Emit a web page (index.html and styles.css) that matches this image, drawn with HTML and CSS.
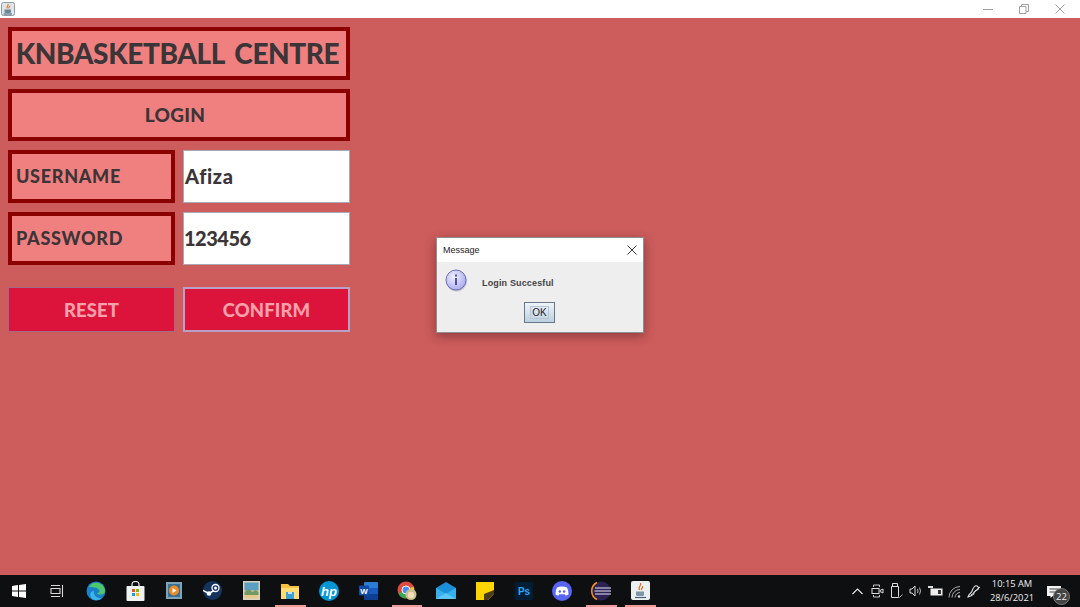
FILE: index.html
```html
<!DOCTYPE html>
<html lang="en">
<head>
  <meta charset="UTF-8">
  <title>KNBasketball Centre</title>
  <link rel="stylesheet" href="styles.css">
</head>
<body>
<div class="app">
  <div class="title-bar">
    <svg class="java-icon" width="14" height="14" viewBox="0 0 14 14">
      <rect x="0.5" y="0.5" width="13" height="13" rx="2" fill="#dfe6ea" stroke="#8d9aa3"/>
      <path d="M7 2c1 2-2 2-.6 4.4M8.6 3.6c.6 1.4-1.4 1.6-.6 2.8" fill="none" stroke="#e2702a" stroke-width="1.1"/>
      <path d="M3.5 7.5h6.500v2.500q0 1-1 1h-4.500q-1 0-1-1z" fill="#6f8595"/>
      <path d="M2.500 12h8.500" stroke="#3f5e78"/>
    </svg>
    <div class="window-controls">
      <svg width="10" height="10" viewBox="0 0 10 10"><path d="M0 5.500h10" stroke="#a0a0a0"/></svg>
      <svg width="10" height="10" viewBox="0 0 10 10"><path d="M.5 2.500h6.500v7h-6.500zM2.500 2.500v-2h7v7h-2.500" fill="none" stroke="#a0a0a0"/></svg>
      <svg width="10" height="10" viewBox="0 0 10 10"><path d="M.5.500l9 9M9.500.500l-9 9" stroke="#a0a0a0"/></svg>
    </div>
  </div>

  <main class="content">
    <div class="form">
      <div class="box box-wide heading">KNBASKETBALL CENTRE</div>
      <div class="box box-wide login">LOGIN</div>
      <div class="box field-label">USERNAME</div>
      <div class="field-value">Afiza</div>
      <div class="box field-label">PASSWORD</div>
      <div class="field-value field-digits">123456</div>
      <button class="action action-reset">RESET</button>
      <button class="action action-confirm">CONFIRM</button>
    </div>

    <div class="dialog">
      <div class="dialog-title">
        <span>Message</span>
        <svg width="10" height="10" viewBox="0 0 10 10"><path d="M.5.500l9 9M9.500.500l-9 9" stroke="#222" stroke-width=".9"/></svg>
      </div>
      <div class="dialog-body">
        <div class="dialog-message">
          <svg width="24" height="24" viewBox="0 0 24 24" class="info-icon">
            <defs>
              <radialGradient id="info-fill" cx="40%" cy="35%" r="70%">
                <stop offset="0" stop-color="#eeeeff"/>
                <stop offset="1" stop-color="#a9a9ee"/>
              </radialGradient>
            </defs>
            <circle cx="11.500" cy="12" r="10.500" fill="#9a9aa8" opacity=".5"/>
            <circle cx="11" cy="11" r="10" fill="url(#info-fill)" stroke="#6f6fb5"/>
            <rect x="10" y="9" width="2" height="7" fill="#5050a0"/>
            <rect x="10" y="5.500" width="2" height="2" fill="#5050a0"/>
          </svg>
          <span class="dialog-text">Login Succesful</span>
        </div>
        <button class="ok-button"><span>OK</span></button>
      </div>
    </div>
  </main>

  <footer class="taskbar">
    <div class="task-icons">
      <div class="task"><svg width="14" height="14" viewBox="0 0 14 14"><path d="M0 2l6-.9v5.400h-6zM7 1l7-1v6.500h-7zM0 7.500h6v5.400l-6-.9zM7 7.500h7v6.500l-7-1z" fill="#fff"/></svg></div>
      <div class="task"><svg width="14" height="14" viewBox="0 0 14 14"><path d="M1 1.500h9M1 12.500h9M1 4.500h9v5h-9zM12.500 1v12" fill="none" stroke="#d8d8d8" stroke-width="1.100"/></svg></div>
      <div class="task"><svg width="20" height="20" viewBox="0 0 20 20"><circle cx="10" cy="10" r="9.500" fill="#1a7fc8"/><path d="M3 6c3-6 14-6 16 3 .5 3-2 4.500-4.500 4.500-2 0-3.500-.6-3.500-1.500 2 0 3-1 2.500-2.500C12.500 6.500 6 5.500 3 6z" fill="#4ec96a"/><path d="M8 10c-1 4 3 8 8 7-4 3.500-9 2.500-11-.5C3 13 5 10 8 10z" fill="#39b6e8"/></svg></div>
      <div class="task"><svg width="19" height="20" viewBox="0 0 19 20"><path d="M6 6V3.500a3.500 3 0 0 1 7 0V6" fill="none" stroke="#eee" stroke-width="1.200"/><rect x="0.500" y="5" width="18" height="15" rx="1" fill="#f2f2f2"/><rect x="6" y="8" width="3" height="3" fill="#f25022"/><rect x="10" y="8" width="3" height="3" fill="#7fba00"/><rect x="6" y="12" width="3" height="3" fill="#00a4ef"/><rect x="10" y="12" width="3" height="3" fill="#ffb900"/></svg></div>
      <div class="task"><svg width="16" height="17" viewBox="0 0 16 17"><rect width="16" height="17" fill="#7ea3bd"/><rect x="2" y="2" width="12" height="13" fill="#3b6f93"/><circle cx="8" cy="8.500" r="5" fill="#f08a24"/><path d="M6.500 6l4 2.500-4 2.500z" fill="#fff"/></svg></div>
      <div class="task"><svg width="19" height="19" viewBox="0 0 19 19"><circle cx="9.500" cy="9.500" r="9.500" fill="#14345c"/><circle cx="12.500" cy="7" r="3.500" fill="none" stroke="#fff" stroke-width="1.300"/><circle cx="12.500" cy="7" r="1.500" fill="#fff"/><circle cx="6" cy="12.500" r="2.300" fill="#fff"/><path d="M0 9.500l6 3 5-3" fill="none" stroke="#fff" stroke-width="1.500"/></svg></div>
      <div class="task"><svg width="17" height="19" viewBox="0 0 17 19"><rect width="17" height="19" fill="#d8d4c4"/><rect x="1.500" y="1.500" width="14" height="16" fill="#e5c88a"/><rect x="1.500" y="1.500" width="14" height="8" fill="#5c9fc4"/><path d="M1.500 11l4-3 4 3 3-2 3 2v3h-14z" fill="#6f9a64"/></svg></div>
      <div class="task task-open"><svg width="18" height="16" viewBox="0 0 18 16"><path d="M0 1h7l2 2h9v13h-18z" fill="#f5c242"/><path d="M0 5h18v11h-18z" fill="#ffdd76"/><rect x="5" y="9" width="8" height="7" fill="#3aa0d8"/><rect x="7" y="9" width="4" height="2" fill="#bfe3f4"/></svg></div>
      <div class="task"><svg width="20" height="20" viewBox="0 0 20 20"><circle cx="10" cy="10" r="10" fill="#0096d6"/><text x="10" y="14.500" class="hp-text">hp</text></svg></div>
      <div class="task"><svg width="19" height="18" viewBox="0 0 19 18"><rect x="5" width="14" height="18" rx="1" fill="#2b7cd3"/><rect x="5" y="6" width="14" height="6" fill="#185abd"/><rect x="5" y="12" width="14" height="6" fill="#103f91"/><rect y="3.500" width="10" height="10" rx="1" fill="#124aa8"/><text x="5" y="11.500" class="word-text">W</text></svg></div>
      <div class="task task-open"><svg width="20" height="20" viewBox="0 0 20 20"><circle cx="9" cy="9" r="8.500" fill="#dd4b3e"/><path d="M9 9l-7.500 3.500A8.500 8.500 0 0 0 9 17.500z" fill="#3aa757"/><path d="M9 9l7.500-3.500a8.500 8.500 0 0 1-3 11z" fill="#fbc02d"/><circle cx="9" cy="9" r="4" fill="#4a8bf5" stroke="#fff"/><circle cx="14" cy="13.500" r="5.500" fill="#c9c08a"/><circle cx="14" cy="14" r="3.200" fill="#f3ddb9"/></svg></div>
      <div class="task"><svg width="20" height="17" viewBox="0 0 20 17"><path d="M0 6L10 0l10 6v11h-20z" fill="#1b8fd8"/><path d="M0 6l10 6 10-6v11h-20z" fill="#35b2ee"/><path d="M0 17l10-6 10 6z" fill="#5cc6f5"/></svg></div>
      <div class="task"><svg width="18" height="18" viewBox="0 0 18 18"><path d="M0 0h18v12l-6 6h-12z" fill="#ffd500"/><path d="M18 8v4l-6 6h-4v-6z" fill="#4a3f1a"/></svg></div>
      <div class="task"><svg width="18" height="18" viewBox="0 0 18 18"><rect width="18" height="18" rx="2" fill="#001e36"/><text x="9" y="12.500" class="ps-text">Ps</text></svg></div>
      <div class="task"><svg width="20" height="20" viewBox="0 0 20 20"><circle cx="10" cy="10" r="10" fill="#5865f2"/><path d="M5 6.500q5-2 10 0 1.500 3 1.500 7-1.500 1-3 1l-.8-1.200h-5.400l-.8 1.200q-1.500 0-3-1 0-4 1.500-7z" fill="#fff"/><circle cx="7.800" cy="10.500" r="1.300" fill="#5865f2"/><circle cx="12.200" cy="10.500" r="1.300" fill="#5865f2"/></svg></div>
      <div class="task task-open"><svg width="20" height="20" viewBox="0 0 20 20"><circle cx="10" cy="10" r="9.500" fill="#2c2255"/><path d="M6 1.500a9.500 9.500 0 0 0 0 17" fill="none" stroke="#f7941e" stroke-width="1.500"/><path d="M4 7h16M3.500 10h16.500M4 13h16" stroke="#e8e4f4" stroke-width="1.200"/></svg></div>
      <div class="task task-open"><svg width="19" height="19" viewBox="0 0 19 19"><rect width="19" height="19" rx="2" fill="#eceff0"/><path d="M9.500 2c1.500 3-3 3-1 7M11.500 5c1 2-2 2.500-.8 4" fill="none" stroke="#e2702a" stroke-width="1.300"/><path d="M5 10.500h8v3q0 1.500-1.500 1.500h-5q-1.500 0-1.500-1.500z" fill="#7c96a8"/><path d="M4 16.500h11" stroke="#3f5e78" stroke-width="1.200"/></svg></div>
    </div>

    <div class="tray">
      <span class="tray-slot"><svg width="11" height="7" viewBox="0 0 11 7"><path d="M.5 6l5-5 5 5" fill="none" stroke="#e8e8e8" stroke-width="1.100"/></svg></span>
      <span class="tray-slot"><svg width="13" height="14" viewBox="0 0 13 14"><path d="M2.500 3V1h6v2M2.500 11v2h6v-2" fill="none" stroke="#ccc"/><rect x="1" y="4.500" width="7" height="5" fill="none" stroke="#ddd"/><path d="M9 6.500l3-1.500v4l-3-1.500z" fill="none" stroke="#ddd"/></svg></span>
      <span class="tray-slot"><svg width="13" height="16" viewBox="0 0 13 16"><path d="M2.500 3.500v-3h5v3M1.500 3.500h7v11h-7z" fill="none" stroke="#ddd"/><path d="M8 13l1.500 1.500 3-3" fill="none" stroke="#aaa"/></svg></span>
      <span class="tray-slot"><svg width="14" height="14" viewBox="0 0 14 14"><path d="M1 5h2l3-3v10l-3-3h-2z" fill="none" stroke="#ddd"/><path d="M8.500 5q1 2 0 4M10.500 3.500q2 3.500 0 7" fill="none" stroke="#bbb"/></svg></span>
      <span class="tray-slot"><svg width="15" height="10" viewBox="0 0 15 10"><rect x="2.500" y="2.500" width="12" height="7" fill="#eee"/><path d="M0 0h5v2h-5z" fill="#ddd"/><rect x="10" y="4" width="3" height="4" fill="#333"/></svg></span>
      <span class="tray-slot"><svg width="13" height="13" viewBox="0 0 13 13"><path d="M1 12.500a11 11 0 0 1 11-11M4 12.500a8 8 0 0 1 8-8M7 12.500a5 5 0 0 1 5-5" fill="none" stroke="#aaa"/><circle cx="11" cy="11.500" r="1.200" fill="#ddd"/></svg></span>
      <span class="tray-slot"><svg width="14" height="14" viewBox="0 0 14 14"><path d="M1 13c1-4 3-3 4-6s3-6 5-5 2 3 0 4-3 1-3 3-3 3-6 4z" fill="none" stroke="#ddd" stroke-width="1.100"/><path d="M4 11c2-1 6-6 9-8" fill="none" stroke="#ddd"/></svg></span>
      <div class="clock"><span>10:15 AM</span><span>28/6/2021</span></div>
      <div class="notify">
        <svg width="14" height="12" viewBox="0 0 14 12"><path d="M0 0h14v10h-8l-2.500 2v-2h-3.500z" fill="#f4f4f4"/><path d="M2.500 3h9M2.500 6h9" stroke="#444"/></svg>
        <span class="notify-count">22</span>
      </div>
    </div>
  </footer>
</div>
</body>
</html>
```

FILE: styles.css
```css
html, body {
  margin: 0;
  padding: 0;
}

.app {
  width: 1080px;
  height: 607px;
  display: flex;
  flex-direction: column;
  background-color: #cd5c5c;
  overflow: hidden;
}

/* window title bar */
.title-bar {
  height: 18px;
  flex: none;
  display: flex;
  align-items: center;
  justify-content: space-between;
  padding-left: 1px;
  background-color: #fff;
}
.window-controls {
  display: flex;
  gap: 26px;
  padding-right: 15px;
}

/* form */
.content {
  flex: 1;
  position: relative;
  padding: 9px 0 0 8px;
}
.form {
  width: 342px;
  display: grid;
  grid-template-columns: 167px 167px;
  grid-template-rows: 53px 52px 53px 53px 45px;
  column-gap: 8px;
  row-gap: 9px;
  font-family: "Lato", "Liberation Sans", sans-serif;
  font-weight: 900;
  color: #3b3538;
}
.box {
  box-sizing: border-box;
  display: flex;
  align-items: center;
  padding-bottom: 2px;
  border: 4px solid #8b0000;
  background-color: #f08080;
}
.box-wide {
  grid-column: 1 / 3;
}
.heading {
  justify-content: center;
  padding-right: 3px;
  font-size: 28px;
  letter-spacing: -.4px;
  word-spacing: 4px;
  white-space: nowrap;
}
.login {
  justify-content: center;
  padding-right: 8px;
  font-size: 19px;
  letter-spacing: .3px;
}
.field-label {
  padding-left: 4px;
  font-size: 18px;
  letter-spacing: .7px;
}
.field-value {
  box-sizing: border-box;
  display: flex;
  align-items: center;
  padding: 0 0 2px 1px;
  border: 1px solid #a9a9b4;
  background-color: #fff;
  font-size: 20px;
  letter-spacing: .6px;
}
.field-digits {
  padding-left: 0;
  letter-spacing: -.5px;
}
.action {
  margin-top: 13px;
  height: 45px;
  padding: 0;
  border: 1px solid #a06a88;
  background-color: #dc143c;
  color: #f9a0aa;
  font-family: inherit;
  font-weight: 900;
  font-size: 18.500px;
  letter-spacing: .1px;
}
.action-confirm {
  border: 2px solid #b9a0c4;
}

/* message dialog */
.dialog {
  position: absolute;
  left: 436px;
  top: 219px;
  width: 208px;
  height: 96px;
  box-sizing: border-box;
  border: 1px solid #8e8e8e;
  background-color: #eeeeee;
  box-shadow: 0 3px 10px rgba(60, 20, 20, .45);
  font-family: "Liberation Sans", sans-serif;
}
.dialog-title {
  height: 24px;
  display: flex;
  align-items: center;
  justify-content: space-between;
  padding: 0 6px 0 6px;
  background-color: #fff;
  font-size: 9px;
  color: #222;
}
.dialog-body {
  display: flex;
  flex-direction: column;
  align-items: center;
}
.dialog-message {
  align-self: stretch;
  display: flex;
  align-items: center;
  height: 38px;
  padding: 2px 0 0 8px;
}
.info-icon {
  flex: none;
  margin-top: -4px;
}
.dialog-text {
  margin-left: 13px;
  font-size: 9px;
  font-weight: 700;
  letter-spacing: .15px;
  color: #444;
}
.ok-button {
  width: 31px;
  height: 21px;
  margin-right: 1px;
  padding: 0;
  border: 1px solid #67788a;
  background: linear-gradient(#eef4f9, #bcd0e0);
  font-family: "Liberation Sans", sans-serif;
  font-size: 10px;
  color: #222;
}
.ok-button span {
  padding: 0 1px;
  outline: 1px solid #b8c6d4;
}

/* taskbar */
.taskbar {
  height: 32px;
  flex: none;
  display: flex;
  justify-content: space-between;
  background-color: #0e0f11;
  font-family: "Open Sans", "Liberation Sans", sans-serif;
}
.task-icons {
  display: flex;
}
.task {
  position: relative;
  width: 38.850px;
  display: flex;
  align-items: center;
  justify-content: center;
  padding-bottom: 1px;
}
.task-open::after {
  content: "";
  position: absolute;
  left: 4px;
  right: 4px;
  bottom: 0;
  height: 2px;
  background-color: #f09a9a;
}
.task-icons .task:first-child {
  width: 38px;
}
.hp-text {
  font: italic 700 13px "Liberation Sans", sans-serif;
  fill: #fff;
  text-anchor: middle;
}
.word-text {
  font: 700 8px "Liberation Sans", sans-serif;
  fill: #fff;
  text-anchor: middle;
}
.ps-text {
  font: 700 10px "Liberation Sans", sans-serif;
  fill: #31a8ff;
  text-anchor: middle;
}
.tray {
  display: flex;
  align-items: center;
  padding-right: 9px;
}
.tray-slot {
  width: 19.400px;
  display: flex;
  justify-content: center;
}
.clock {
  display: flex;
  flex-direction: column;
  align-items: center;
  width: 52px;
  margin-left: 2.300px;
  font-size: 9.300px;
  line-height: 14.500px;
  color: #eeeeee;
}
.notify {
  position: relative;
  width: 24px;
  height: 20px;
  margin-left: 9px;
}
.notify-count {
  position: absolute;
  right: 1px;
  bottom: -4px;
  width: 15px;
  height: 15px;
  border: 1px solid #777;
  border-radius: 50%;
  background-color: #444;
  text-align: center;
  font-size: 9.500px;
  line-height: 15px;
  color: #eee;
}
```
